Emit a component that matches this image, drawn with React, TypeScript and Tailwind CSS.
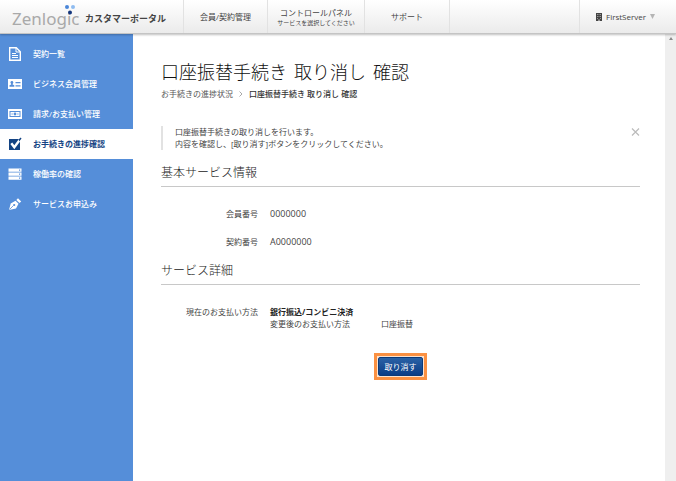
import type { ReactNode } from "react";

const menu: { label: string; icon: ReactNode; active?: boolean }[] = [
  {
    label: "契約一覧",
    icon: (
      <g fill="none" stroke="currentColor">
        <path d="M1.7 .7h6.6l4 4v8.6H1.7z" strokeWidth="1.4" />
        <path d="M8 1v4h4" strokeWidth="1" />
        <path d="M4 6.500h4M4 8.500h6M4 10.500h6" strokeWidth="1.1" />
      </g>
    ),
  },
  {
    label: "ビジネス会員管理",
    icon: (
      <>
        <path d="M0 2h14v10H0z" fill="currentColor" />
        <g fill="#558ed9">
          <circle cx="3.9" cy="5.5" r="1.4" />
          <path d="M3.2 6h1.4v1.4l1.7 .9v1.5H1.5V8.3l1.7-.9zM7.500 5h5v1.200h-5zM7.500 8.300h5v1.200h-5z" />
        </g>
      </>
    ),
  },
  {
    label: "請求/お支払い管理",
    icon: (
      <>
        <path d="M0 2h14v10H0z" fill="currentColor" />
        <path d="M1.500 4h11v6h-11z" fill="#558ed9" />
        <path d="M2.500 5h9v4h-9z" fill="currentColor" />
        <g fill="#558ed9">
          <circle cx="7" cy="7" r="1.4" />
          <path d="M3.500 6.400h1.200v1.200H3.500zM9.300 6.400h1.200v1.200H9.300z" />
        </g>
      </>
    ),
  },
  {
    label: "お手続きの進捗確認",
    active: true,
    icon: (
      <>
        <path d="M1 2h11v11H1z" fill="currentColor" />
        <path d="M3.300 6.200l3 4L12.800 1.500" fill="none" stroke="#fff" strokeWidth="2.4" />
        <path d="M10.600 2.600L12.700 .6l.8 .8-2.300 3.200z" fill="currentColor" />
      </>
    ),
  },
  {
    label: "稼働率の確認",
    icon: (
      <>
        <path d="M.500 1.500h13v3.200H.500zM.500 5.500h13v3.200H.500zM.500 9.500h13v3.200H.500z" fill="currentColor" />
        <path d="M11 2.500h1.200v1.200H11zM11 6.500h1.200v1.200H11zM11 10.500h1.200v1.200H11z" fill="#558ed9" />
      </>
    ),
  },
  {
    label: "サービスお申込み",
    icon: (
      <>
        <path d="M1 13l1.700-6.500 4.800-2.700 3 3L8 11.500z" fill="currentColor" />
        <path d="M8.300 2.900l1.700-1.700 3.200 3.200-1.700 1.700z" fill="currentColor" />
        <path d="M1.500 12.500l4-4" stroke="#558ed9" strokeWidth=".8" />
        <circle cx="6.200" cy="8" r="1.100" fill="#558ed9" />
      </>
    ),
  },
];

function Logo() {
  return (
    <a href="#" className="flex w-[183px] shrink-0 items-center pl-3">
      <span className="relative w-[73px] pt-1 font-['Noto_Sans','Open_Sans',sans-serif] text-[17px] leading-6 text-[#a9a9a9]">
        Zenlogic
        <svg className="absolute top-[2px] left-[52px]" width="12" height="10" viewBox="0 0 12 10" aria-hidden="true">
          <circle cx="3" cy="2" r="2" fill="#4a86d8" />
          <circle cx="9" cy="2" r="2" fill="#8fbcf0" />
          <circle cx="6" cy="7.500" r="2" fill="#12357c" />
        </svg>
      </span>
      <span className="pt-1 text-[9px] font-bold whitespace-nowrap text-[#444]">カスタマーポータル</span>
    </a>
  );
}

function Header() {
  return (
    <header className="relative flex h-[34px] border-b border-[#c4c4c4] bg-gradient-to-b from-white to-[#ebebeb] shadow-[0_1px_2px_rgba(0,0,0,0.25)]">
      <Logo />
      <nav className="flex text-center leading-3 whitespace-nowrap text-[#444]">
        <a href="#" className="flex w-[84px] items-center justify-center border-l border-[#e2e2e2]">
          会員/契約管理
        </a>
        <a href="#" className="flex w-[97px] flex-col items-center justify-center border-l border-[#e2e2e2]">
          <span>コントロールパネル</span>
          <span className="text-[6px] leading-2">サービスを選択してください</span>
        </a>
        <a href="#" className="flex w-[86px] items-center justify-center border-x border-[#e2e2e2]">
          サポート
        </a>
      </nav>
      <button type="button" className="ml-auto flex w-[97px] items-center border-l border-[#e2e2e2] pl-[15px] text-[#444]">
        <svg width="8" height="8" viewBox="0 0 8 8" aria-hidden="true">
          <path d="M1 0h6v8H1z" fill="#444" />
          <path d="M2 1h1v1H2zM3.500 1h1v1h-1zM5 1h1v1H5zM2 3h1v1H2zM3.500 3h1v1h-1zM5 3h1v1H5zM2 5h1v1H2zM5 5h1v1H5zM3 6.500h2V8H3z" fill="#999" />
        </svg>
        <span className="ml-[3px]">FirstServer</span>
        <svg className="ml-1" width="5" height="5" viewBox="0 0 5 5" aria-hidden="true">
          <path d="M0 0h5L2.500 5z" fill="#b5b5b5" />
        </svg>
      </button>
    </header>
  );
}

function Sidebar() {
  return (
    <nav className="w-[133px] shrink-0 bg-[#558ed9] pt-[5px]">
      <ul>
        {menu.map((item) => (
          <li key={item.label}>
            <a
              href="#"
              className={`flex h-[30px] items-center gap-[11px] pl-2 whitespace-nowrap ${
                item.active ? "bg-white font-bold text-[#134383]" : "font-medium text-white"
              }`}
            >
              <svg width="14" height="14" viewBox="0 0 14 14" className="shrink-0" aria-hidden="true">
                {item.icon}
              </svg>
              {item.label}
            </a>
          </li>
        ))}
      </ul>
    </nav>
  );
}

function SectionTitle({ children }: { children: ReactNode }) {
  return (
    <h2 className="mt-3 border-b border-[#c8c8c8] pb-[2px] text-[12px] leading-[22px] font-light text-[#222]">
      {children}
    </h2>
  );
}

export default function App() {
  return (
    <div className="flex min-h-screen flex-col bg-white font-['Open_Sans','Noto_Sans_CJK_JP',sans-serif] text-[8px] leading-3 text-[#444]">
      <Header />
      <div className="flex flex-1">
        <Sidebar />
        <main className="min-w-0 flex-1 pt-6 pr-[25px] pb-6 pl-7">
          <h1 className="flex gap-[7px] text-[18px] leading-7 font-light text-[#111]">
            <span>口座振替手続き</span>
            <span>取り消し</span>
            <span>確認</span>
          </h1>
          <div className="flex h-4 items-center">
            <a href="#" className="text-[#555]">お手続きの進捗状況</a>
            <svg className="mx-[6px]" width="4" height="6" viewBox="0 0 4 6" aria-hidden="true">
              <path d="M.500 .500L3 3 .500 5.500" fill="none" stroke="#aaa" />
            </svg>
            <span className="font-medium text-[#333]">口座振替手続き 取り消し 確認</span>
          </div>

          <div className="mt-6 flex items-start justify-between border-l-2 border-[#e2e2e2] pl-3">
            <p>
              口座振替手続きの取り消しを行います。
              <br />
              内容を確認し、[取り消す]ボタンをクリックしてください。
            </p>
            <button type="button" aria-label="閉じる" className="pt-[2px]">
              <svg width="9" height="8" viewBox="0 0 9 8" aria-hidden="true">
                <path d="M1 .500l7 7M8 .500l-7 7" stroke="#bbb" strokeWidth="1.200" />
              </svg>
            </button>
          </div>

          <SectionTitle>基本サービス情報</SectionTitle>
          <dl className="flex flex-col gap-4 pt-[21px]">
            <div className="flex gap-3">
              <dt className="w-[97px] text-right">会員番号</dt>
              <dd className="text-[9px]">0000000</dd>
            </div>
            <div className="flex gap-3">
              <dt className="w-[97px] text-right">契約番号</dt>
              <dd className="text-[9px]">A0000000</dd>
            </div>
          </dl>

          <SectionTitle>サービス詳細</SectionTitle>
          <dl className="flex gap-3 pt-[21px]">
            <dt className="w-[97px] text-right">現在のお支払い方法</dt>
            <dd>
              <p className="font-bold text-[#222]">銀行振込/コンビニ決済</p>
              <p className="flex">
                <span className="w-[111px]">変更後のお支払い方法</span>
                <span>口座振替</span>
              </p>
            </dd>
          </dl>

          <div className="mt-[23px] flex justify-center">
            <div className="border-[3px] border-[#fb9142] bg-[#fbe3d0] p-px">
              <button
                type="button"
                className="block h-[19px] w-[45px] rounded-[2px] border border-[#0d3a78] bg-gradient-to-b from-[#2a62a6] to-[#0b3d86] text-white"
              >
                取り消す
              </button>
            </div>
          </div>
        </main>
        <div className="flex w-[11px] shrink-0 justify-center bg-[#efefef] pt-[3px]">
          <svg width="4" height="3" viewBox="0 0 4 3" aria-hidden="true">
            <path d="M0 3h4L2 0z" fill="#8a8a8a" />
          </svg>
        </div>
      </div>
    </div>
  );
}
